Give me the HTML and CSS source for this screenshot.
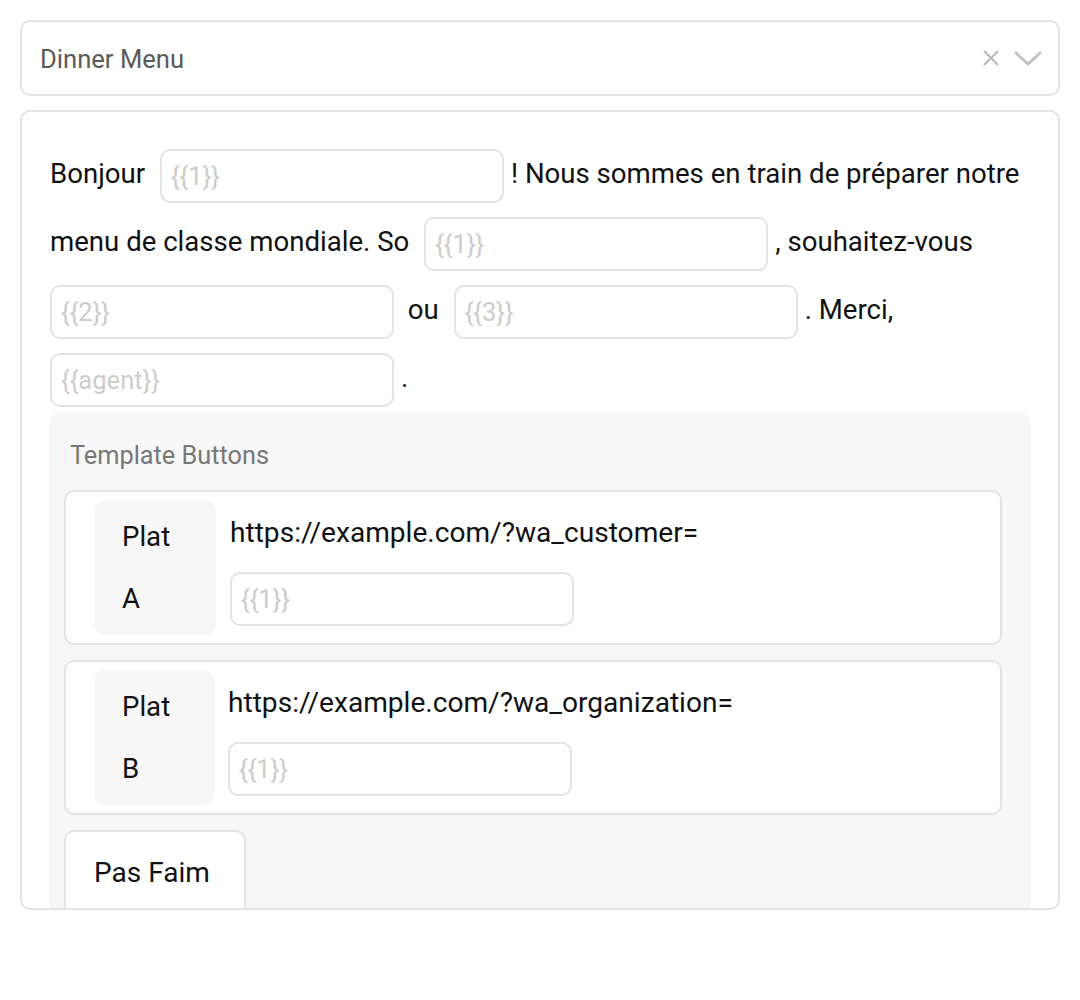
FILE: index.html
```html
<!DOCTYPE html>
<html lang="fr">
<head>
<meta charset="utf-8">
<title>Dinner Menu</title>
<link rel="stylesheet" href="styles.css">
</head>
<body>
<div class="page">
  <div class="select">
    <span class="select-value">Dinner Menu</span>
    <div class="select-icons">
      <svg class="icon-clear" width="18" height="18" viewBox="0 0 18 18"><path d="M2 2 L16 16 M16 2 L2 16" stroke="#b8b8b8" stroke-width="2" fill="none"/></svg>
      <svg class="icon-chevron" width="28" height="16" viewBox="0 0 28 16"><path d="M2 2 L14 13 L26 2" stroke="#c0c0c0" stroke-width="3" fill="none" stroke-linecap="round" stroke-linejoin="round"/></svg>
    </div>
  </div>
  <div class="card">
    <p class="message">Bonjour<span class="sp"></span> <input class="var" placeholder="{{1}}">! Nous sommes en train de préparer notre menu de classe mondiale. So<span class="sp"></span> <input class="var" placeholder="{{1}}">, souhaitez-vous<span class="sp"></span> <input class="var" placeholder="{{2}}"> ou<span class="sp"></span> <input class="var" placeholder="{{3}}">. Merci,<span class="sp"></span> <input class="var" placeholder="{{agent}}">.</p>
    <div class="buttons">
      <div class="buttons-title">Template Buttons</div>
      <div class="btn-card">
        <div class="btn-label">Plat A</div>
        <div class="btn-body">
          <div class="btn-url">https://example.com/?wa_customer=</div>
          <input class="var url-var" placeholder="{{1}}">
        </div>
      </div>
      <div class="btn-card">
        <div class="btn-label narrow">Plat B</div>
        <div class="btn-body">
          <div class="btn-url">https://example.com/?wa_organization=</div>
          <input class="var url-var" placeholder="{{1}}">
        </div>
      </div>
      <div class="btn-simple">Pas Faim</div>
    </div>
  </div>
</div>
</body>
</html>
```
FILE: styles.css
```css
html, body {
  margin: 0;
  padding: 0;
  background: #ffffff;
}
body {
  font-family: Roboto, "Liberation Sans", Arial, sans-serif;
  color: #111111;
}
.page {
  padding: 20px;
  width: 1040px;
}
.select {
  box-sizing: border-box;
  height: 76px;
  border: 2px solid #e3e3e3;
  border-radius: 10px;
  display: flex;
  align-items: center;
  justify-content: space-between;
  padding: 0 16px 0 18px;
}
.select-value {
  font-size: 25.6px;
  color: #5a5a5a;
  margin-top: 2px;
}
.select-icons {
  display: flex;
  align-items: center;
  gap: 14px;
}
.icon-clear {
  display: block;
}
.icon-chevron {
  display: block;
  margin-top: 2px;
}
.card {
  box-sizing: border-box;
  margin-top: 14px;
  height: 800px;
  border: 2px solid #e3e3e3;
  border-radius: 10px;
  padding: 28px 28px 0 28px;
  overflow: hidden;
}
.message {
  margin: 0;
  font-size: 27.6px;
  line-height: 68px;
}
.sp {
  display: inline-block;
  width: 8px;
}
.var {
  box-sizing: border-box;
  width: 344px;
  height: 54px;
  border: 2px solid #e3e3e3;
  border-radius: 10px;
  padding: 0 9px;
  font-family: inherit;
  font-size: 25.6px;
  color: #111;
  background: #ffffff;
  vertical-align: middle;
  margin: 0 7px 0 0;
  outline: none;
}
.var::placeholder {
  color: #cccccc;
}
.buttons {
  background: #f7f7f7;
  border-radius: 10px;
  padding: 24px 28px 0 14px;
  display: flex;
  flex-direction: column;
  gap: 15px;
  align-items: flex-start;
}
.buttons-title {
  font-size: 25.3px;
  line-height: 40px;
  color: #777777;
  margin-left: 6px;
  margin-bottom: -1px;
}
.btn-card {
  box-sizing: border-box;
  align-self: stretch;
  background: #ffffff;
  border: 2px solid #e3e3e3;
  border-radius: 10px;
  padding: 8px 28px;
  display: flex;
  align-items: flex-start;
  gap: 14px;
}
.btn-label {
  box-sizing: border-box;
  width: 122px;
  background: #f7f7f7;
  border-radius: 10px;
  padding: 6px 28px 5px;
  font-size: 27.6px;
  line-height: 62px;
}
.btn-label.narrow {
  width: 120px;
}
.btn-body {
  display: flex;
  flex-direction: column;
  align-items: flex-start;
}
.btn-url {
  font-size: 28.1px;
  line-height: 62px;
  margin-top: 2px;
}
.url-var {
  margin-top: 8px;
}
.btn-simple {
  box-sizing: border-box;
  background: #ffffff;
  border: 2px solid #e3e3e3;
  border-radius: 10px;
  padding: 10px 34px 10px 28px;
  font-size: 28px;
  line-height: 62px;
}
```
